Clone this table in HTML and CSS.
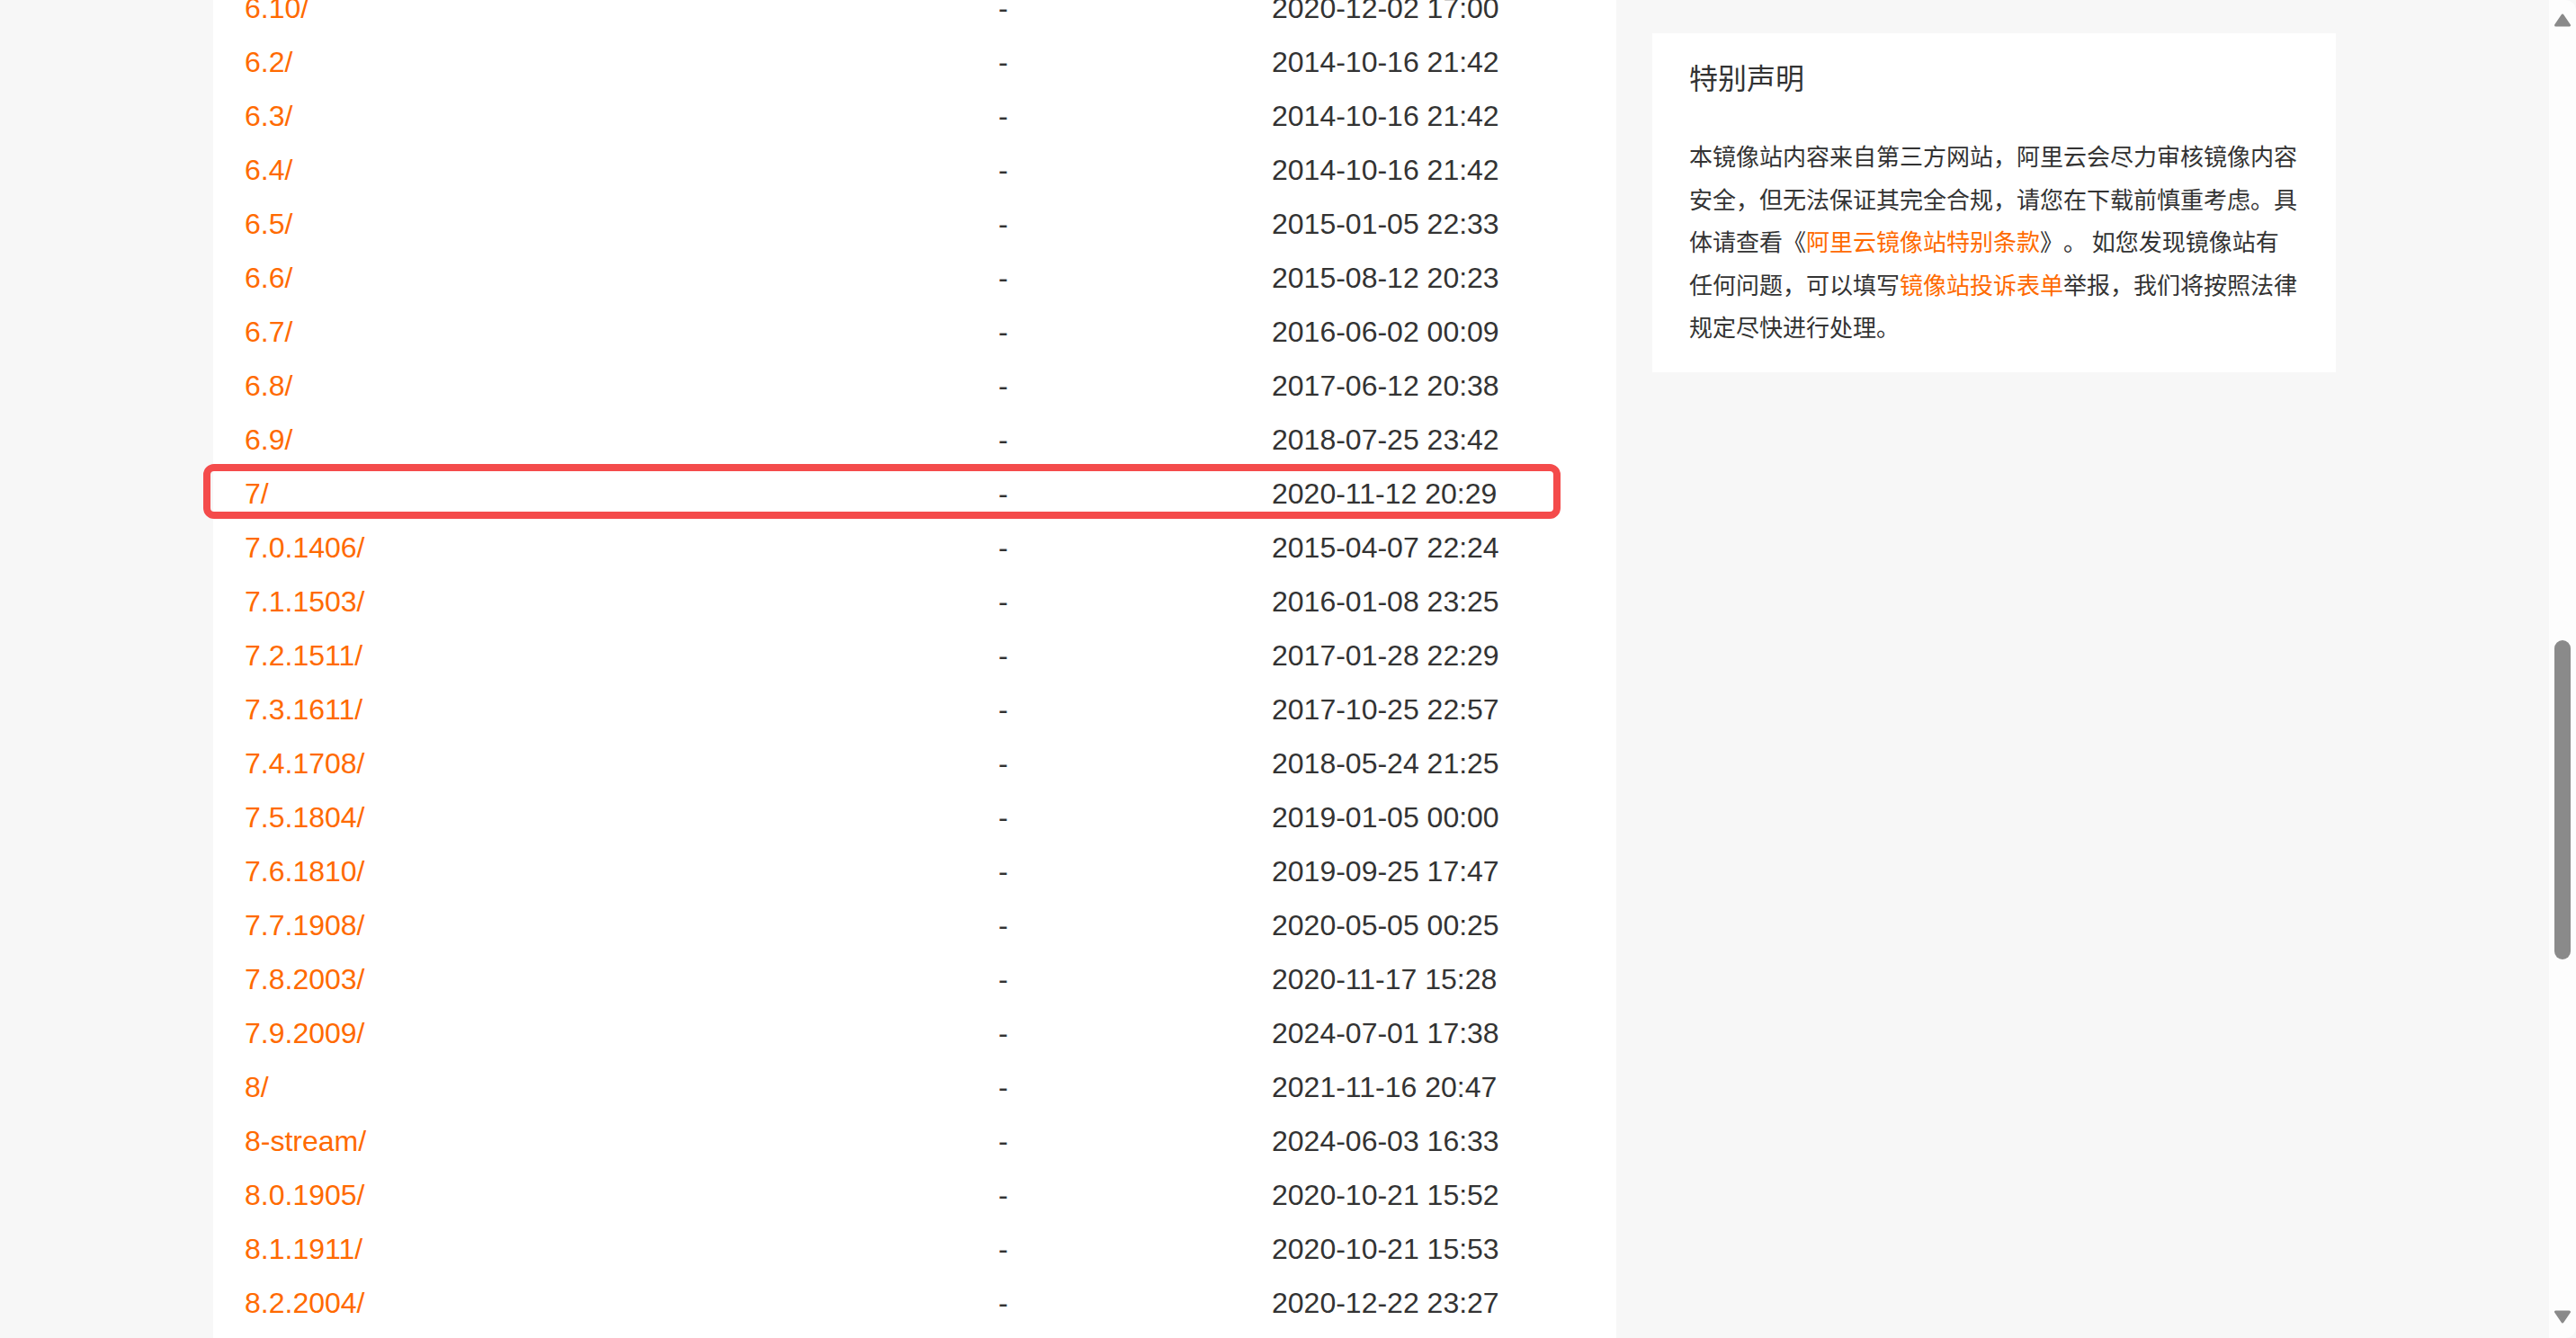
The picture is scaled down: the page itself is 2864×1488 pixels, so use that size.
FILE: index.html
```html
<!DOCTYPE html>
<html lang="zh-CN">
<head>
<meta charset="utf-8">
<title>centos mirror</title>
<link rel="stylesheet" href="styles.css">
</head>
<body>
<div class="window">
  <div class="viewport">
    <div class="container">
      <div class="main">
        <div class="list">
          <div class="row"><a class="name">6.10/</a><span class="size">-</span><span class="date">2020-12-02 17:00</span></div>
          <div class="row"><a class="name">6.2/</a><span class="size">-</span><span class="date">2014-10-16 21:42</span></div>
          <div class="row"><a class="name">6.3/</a><span class="size">-</span><span class="date">2014-10-16 21:42</span></div>
          <div class="row"><a class="name">6.4/</a><span class="size">-</span><span class="date">2014-10-16 21:42</span></div>
          <div class="row"><a class="name">6.5/</a><span class="size">-</span><span class="date">2015-01-05 22:33</span></div>
          <div class="row"><a class="name">6.6/</a><span class="size">-</span><span class="date">2015-08-12 20:23</span></div>
          <div class="row"><a class="name">6.7/</a><span class="size">-</span><span class="date">2016-06-02 00:09</span></div>
          <div class="row"><a class="name">6.8/</a><span class="size">-</span><span class="date">2017-06-12 20:38</span></div>
          <div class="row"><a class="name">6.9/</a><span class="size">-</span><span class="date">2018-07-25 23:42</span></div>
          <div class="row"><span class="highlight"></span><a class="name">7/</a><span class="size">-</span><span class="date">2020-11-12 20:29</span></div>
          <div class="row"><a class="name">7.0.1406/</a><span class="size">-</span><span class="date">2015-04-07 22:24</span></div>
          <div class="row"><a class="name">7.1.1503/</a><span class="size">-</span><span class="date">2016-01-08 23:25</span></div>
          <div class="row"><a class="name">7.2.1511/</a><span class="size">-</span><span class="date">2017-01-28 22:29</span></div>
          <div class="row"><a class="name">7.3.1611/</a><span class="size">-</span><span class="date">2017-10-25 22:57</span></div>
          <div class="row"><a class="name">7.4.1708/</a><span class="size">-</span><span class="date">2018-05-24 21:25</span></div>
          <div class="row"><a class="name">7.5.1804/</a><span class="size">-</span><span class="date">2019-01-05 00:00</span></div>
          <div class="row"><a class="name">7.6.1810/</a><span class="size">-</span><span class="date">2019-09-25 17:47</span></div>
          <div class="row"><a class="name">7.7.1908/</a><span class="size">-</span><span class="date">2020-05-05 00:25</span></div>
          <div class="row"><a class="name">7.8.2003/</a><span class="size">-</span><span class="date">2020-11-17 15:28</span></div>
          <div class="row"><a class="name">7.9.2009/</a><span class="size">-</span><span class="date">2024-07-01 17:38</span></div>
          <div class="row"><a class="name">8/</a><span class="size">-</span><span class="date">2021-11-16 20:47</span></div>
          <div class="row"><a class="name">8-stream/</a><span class="size">-</span><span class="date">2024-06-03 16:33</span></div>
          <div class="row"><a class="name">8.0.1905/</a><span class="size">-</span><span class="date">2020-10-21 15:52</span></div>
          <div class="row"><a class="name">8.1.1911/</a><span class="size">-</span><span class="date">2020-10-21 15:53</span></div>
          <div class="row"><a class="name">8.2.2004/</a><span class="size">-</span><span class="date">2020-12-22 23:27</span></div>
        </div>
      </div>
      <aside class="sidebar">
        <h2 class="side-title">特别声明</h2>
        <p class="side-text">本镜像站内容来自第三方网站，阿里云会尽力审核镜像内容安全，但无法保证其完全合规，请您在下载前慎重考虑。具体请查看《<a class="side-link">阿里云镜像站特别条款</a>》。 如您发现镜像站有任何问题，可以填写<a class="side-link">镜像站投诉表单</a>举报，我们将按照法律规定尽快进行处理。</p>
      </aside>
    </div>
  </div>
  <div class="scrollbar">
    <div class="sb-btn sb-up">
      <svg width="18" height="15" viewBox="0 0 18 15"><polygon points="9,2 16.5,13 1.5,13" fill="#8a8a8a" stroke="#8a8a8a" stroke-width="3" stroke-linejoin="round"/></svg>
    </div>
    <div class="sb-track"><div class="sb-thumb"></div></div>
    <div class="sb-btn sb-down">
      <svg width="18" height="15" viewBox="0 0 18 15"><polygon points="1.5,2 16.5,2 9,13" fill="#8a8a8a" stroke="#8a8a8a" stroke-width="3" stroke-linejoin="round"/></svg>
    </div>
  </div>
</div>
</body>
</html>
```

FILE: styles.css
```css
html, body {
  margin: 0;
  padding: 0;
  height: 100%;
  overflow: hidden;
}

body {
  background: #f7f7f7;
  font-family: "Liberation Sans", Arial, sans-serif;
  color: #333;
}

.window {
  display: flex;
  height: 100vh;
}

.viewport {
  flex: 1;
  overflow: hidden;
  background: #f7f7f7;
}

.container {
  width: 2360px;
  margin: 0 auto;
  display: flex;
  gap: 40px;
  align-items: flex-start;
}

.main {
  width: 1560px;
  min-height: 1600px;
  background: #fff;
  box-sizing: border-box;
  padding-left: 35px;
}

.list {
  margin-top: -21px;
}

.row {
  position: relative;
  display: grid;
  grid-template-columns: 838px 304px 1fr;
  height: 60px;
  line-height: 60px;
  font-size: 32px;
  white-space: nowrap;
}

.name {
  color: #ff6a00;
  text-decoration: none;
}

.size,
.date {
  color: #333;
}

.highlight {
  position: absolute;
  left: -46px;
  top: -3px;
  width: 1509px;
  height: 61px;
  box-sizing: border-box;
  border: 8px solid #f44b4b;
  border-radius: 12px;
}

.sidebar {
  width: 760px;
  margin-top: 37px;
  background: #fff;
  box-sizing: border-box;
  padding: 24px 40px 27px 41px;
  font-family: "Noto Sans CJK SC", "Liberation Sans", sans-serif;
  text-spacing-trim: space-all;
  font-feature-settings: "halt" 0, "chws" 0;
}

.side-title {
  margin: 0 0 40px;
  font-size: 32px;
  font-weight: normal;
  line-height: 48px;
  color: #333;
}

.side-text {
  margin: 0;
  font-size: 26px;
  line-height: 47.5px;
  color: #333;
}

.side-link {
  color: #ff6a00;
  text-decoration: none;
}

.scrollbar {
  width: 30px;
  display: flex;
  flex-direction: column;
  background: #fdfdfd;
  border-radius: 0 12px 12px 0;
}

.sb-btn {
  display: flex;
  justify-content: center;
}

.sb-up {
  height: 45px;
  align-items: flex-start;
  padding-top: 15px;
  box-sizing: border-box;
}

.sb-down {
  height: 45px;
  align-items: flex-start;
  padding-top: 14px;
  box-sizing: border-box;
}

.sb-track {
  flex: 1;
  display: flex;
  flex-direction: column;
  align-items: center;
}

.sb-thumb {
  margin-top: 667px;
  width: 18px;
  height: 355px;
  border-radius: 9px;
  background: #8a8a8a;
}
```
